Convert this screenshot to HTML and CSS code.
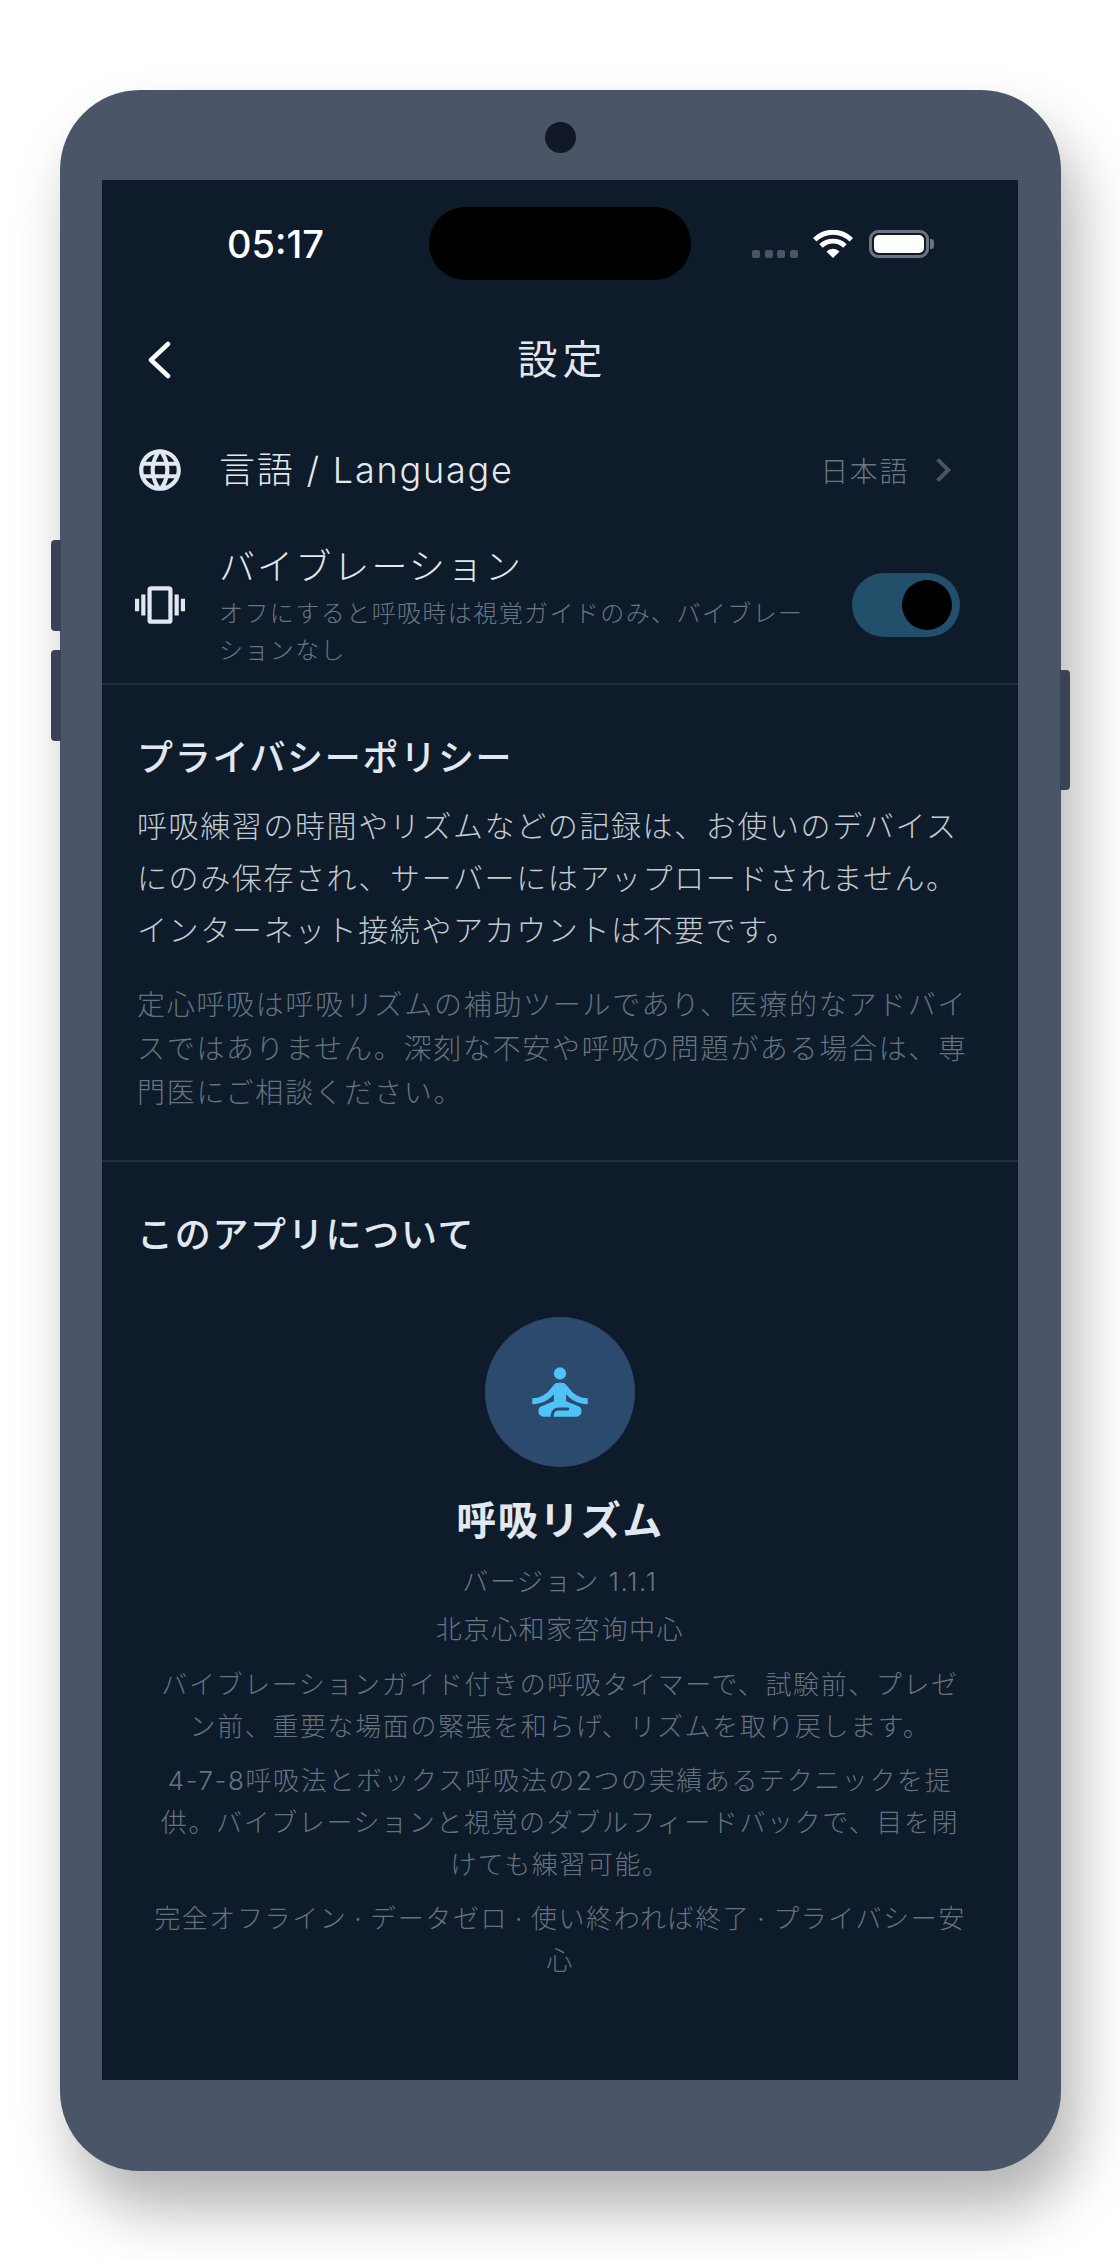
FILE: index.html
```html
<!DOCTYPE html>
<html lang="ja">
<head>
    <meta charset="UTF-8">
    <title>設定</title>
    <link rel="stylesheet" href="styles.css">
</head>
<body>
    <div class="phone">
        <span class="side-btn btn-a"></span>
        <span class="side-btn btn-b"></span>
        <span class="side-btn btn-c"></span>
        <div class="bezel-top"><span class="camera"></span></div>
        <div class="screen">
            <div class="status">
                <span class="time">05:17</span>
                <span class="island"></span>
                <div class="status-icons">
                    <span class="dots"><i></i><i></i><i></i><i></i></span>
                    <svg class="wifi" viewBox="0 0 40 28"><path d="M20 28 13.500 21.500a9.200 9.200 0 0 1 13 0Z M9.800 17.800 6.300 14.300a19.400 19.400 0 0 1 27.400 0l-3.500 3.500a14.400 14.400 0 0 0-20.400 0Z M3.500 11.500 0 8a28.300 28.300 0 0 1 40 0l-3.500 3.500a23.300 23.300 0 0 0-33 0Z" fill="#fff"/></svg>
                    <span class="battery"><span class="battery-fill"></span></span>
                    <span class="battery-cap"></span>
                </div>
            </div>
            <div class="nav">
                <svg class="back" viewBox="0 0 24 38"><path d="M21 3 4 19l17 16" fill="none" stroke="#fff" stroke-width="4.500" stroke-linecap="round" stroke-linejoin="round"/></svg>
                <h1>設定</h1>
            </div>
            <div class="row lang-row">
                <svg class="row-icon" viewBox="0 0 24 24" fill="#e2e8f0"><path d="M11.990 2C6.470 2 2 6.480 2 12s4.470 10 9.990 10C17.520 22 22 17.520 22 12S17.520 2 11.990 2zm6.930 6h-2.950c-.320-1.250-.780-2.450-1.380-3.560 1.840.630 3.370 1.910 4.330 3.560zM12 4.040c.830 1.200 1.480 2.530 1.910 3.960h-3.820c.430-1.430 1.080-2.760 1.910-3.960zM4.260 14C4.100 13.360 4 12.690 4 12s.100-1.360.260-2h3.380c-.080.660-.140 1.320-.140 2 0 .680.060 1.340.140 2H4.260zm.820 2h2.950c.320 1.250.780 2.450 1.380 3.560-1.840-.630-3.370-1.900-4.330-3.560zm2.950-8H5.080c.960-1.660 2.490-2.930 4.330-3.560C8.810 5.550 8.350 6.750 8.030 8zM12 19.960c-.830-1.200-1.480-2.530-1.910-3.960h3.820c-.430 1.430-1.080 2.760-1.910 3.960zM14.340 14H9.660c-.090-.660-.160-1.320-.160-2 0-.680.070-1.350.160-2h4.680c.090.650.160 1.320.160 2 0 .680-.070 1.340-.160 2zm.250 5.560c.600-1.110 1.060-2.310 1.380-3.560h2.950c-.960 1.650-2.490 2.930-4.330 3.560zM16.360 14c.080-.660.140-1.320.140-2 0-.680-.060-1.340-.140-2h3.380c.160.640.260 1.310.260 2s-.100 1.360-.260 2h-3.380z"/></svg>
                <span class="row-title">言語 / Language</span>
                <span class="row-value">日本語</span>
                <svg class="chev" viewBox="0 0 24 24" fill="#4b5563"><path d="M10 6 8.590 7.410 13.170 12l-4.580 4.590L10 18l6-6z"/></svg>
            </div>
            <div class="row vib-row">
                <svg class="row-icon" viewBox="0 0 24 24" fill="#e2e8f0"><path d="M0 15h2V9H0v6zm3 2h2V7H3v10zm19-8v6h2V9h-2zm-3 8h2V7h-2v10zM16.500 3h-9C6.670 3 6 3.670 6 4.500v15c0 .830.670 1.500 1.500 1.500h9c.830 0 1.500-.670 1.500-1.500v-15c0-.830-.670-1.500-1.500-1.500zM16 19H8V5h8v14z"/></svg>
                <div class="vib-text">
                    <div class="row-title">バイブレーション</div>
                    <div class="row-sub">オフにすると呼吸時は視覚ガイドのみ、バイブレーションなし</div>
                </div>
                <span class="toggle"><span class="knob"></span></span>
            </div>
            <div class="section privacy">
                <h2>プライバシーポリシー</h2>
                <p class="body-text">呼吸練習の時間やリズムなどの記録は、お使いのデバイスにのみ保存され、サーバーにはアップロードされません。インターネット接続やアカウントは不要です。</p>
                <p class="note">定心呼吸は呼吸リズムの補助ツールであり、医療的なアドバイスではありません。深刻な不安や呼吸の問題がある場合は、専門医にご相談ください。</p>
            </div>
            <div class="section about">
                <h2>このアプリについて</h2>
                <div class="about-box">
                    <div class="logo">
                        <svg viewBox="0 0 24 24" fill="#4fc3f7"><circle cx="12" cy="6" r="2"/><path d="M21 16v-2c-2.240 0-4.160-.96-5.600-2.680l-1.340-1.600A1.980 1.980 0 0 0 12.530 9h-1.050c-.59 0-1.150.26-1.530.72l-1.340 1.600C7.160 13.040 5.240 14 3 14v2c2.770 0 5.190-1.170 7-3.250V15l-3.880 1.550c-.67.27-1.120.93-1.120 1.660C5 19.200 5.800 20 6.790 20H9v-.500a2.500 2.500 0 0 1 2.500-2.500h3c.280 0 .5.220.5.500s-.22.500-.5.500h-3c-.830 0-1.500.670-1.500 1.500v.500h7.210c.990 0 1.790-.8 1.790-1.790 0-.730-.45-1.390-1.120-1.660L14 15v-2.250c1.810 2.080 4.230 3.250 7 3.250z"/></svg>
                    </div>
                    <div class="app-name">呼吸リズム</div>
                    <div class="meta">バージョン 1.1.1</div>
                    <div class="meta company">北京心和家咨询中心</div>
                    <p class="desc first">バイブレーションガイド付きの呼吸タイマーで、試験前、プレゼン前、重要な場面の緊張を和らげ、リズムを取り戻します。</p>
                    <p class="desc">4-7-8呼吸法とボックス呼吸法の2つの実績あるテクニックを提供。バイブレーションと視覚のダブルフィードバックで、目を閉けても練習可能。</p>
                    <p class="desc">完全オフライン · データゼロ · 使い終われば終了 · プライバシー安心</p>
                </div>
            </div>
        </div>
    </div>
</body>
</html>
```

FILE: styles.css
```css
* {
    box-sizing: border-box;
}
body {
    margin: 0;
    background: #fff;
    font-family: Inter, "Noto Sans CJK JP", sans-serif;
    width: 1120px;
    height: 2260px;
    overflow: hidden;
}
h1, h2, p {
    margin: 0;
    font-weight: normal;
}
.phone {
    position: relative;
    width: 1001px;
    height: 2081px;
    margin: 90px 0 0 60px;
    background: #4a5568;
    border-radius: 80px;
    padding: 0 43px 0 42px;
    box-shadow: 15px 38px 60px rgba(0, 0, 0, 0.3);
}
.side-btn {
    position: absolute;
    width: 10px;
    background: #3a4256;
    border-radius: 4px 0 0 4px;
}
.btn-a {
    left: -9px;
    top: 450px;
    height: 91px;
}
.btn-b {
    left: -9px;
    top: 560px;
    height: 91px;
}
.btn-c {
    right: -9px;
    top: 580px;
    height: 120px;
    border-radius: 0 4px 4px 0;
}
.bezel-top {
    height: 90px;
    padding-top: 32px;
    display: flex;
    justify-content: center;
}
.camera {
    width: 31px;
    height: 31px;
    border-radius: 50%;
    background: #111827;
}
.screen {
    height: 1900px;
    background: #0d1b2a;
    color: #e2e8f0;
}
.status {
    position: relative;
    height: 148px;
    padding: 42px 0 0 125px;
}
.time {
    font-size: 38px;
    font-weight: 500;
    color: #fff;
    line-height: 44px;
}
.island {
    position: absolute;
    left: 327px;
    top: 27px;
    width: 262px;
    height: 73px;
    border-radius: 37px;
    background: #000;
}
.status-icons {
    position: absolute;
    left: 650px;
    top: 50px;
    display: flex;
    align-items: flex-end;
    height: 28px;
}
.dots {
    display: flex;
    gap: 4.500px;
}
.dots i {
    width: 8px;
    height: 8px;
    border-radius: 2px;
    background: #4b5563;
}
.wifi {
    width: 40px;
    height: 28px;
    margin-left: 15.500px;
}
.battery {
    width: 60px;
    height: 28px;
    margin-left: 16px;
    border: 3px solid #6b7280;
    border-radius: 9px;
    padding: 2px;
    display: flex;
}
.battery-fill {
    flex: 1;
    background: #fff;
    border-radius: 5px;
}
.battery-cap {
    width: 4px;
    height: 10px;
    margin: 0 0 9px 1px;
    background: #6b7280;
    border-radius: 0 3px 3px 0;
}
.nav {
    position: relative;
    height: 64px;
    display: flex;
    align-items: center;
    justify-content: center;
}
.nav h1 {
    margin-left: 5px;
    font-size: 40px;
    font-weight: 400;
    letter-spacing: 5px;
    line-height: 64px;
}
.back {
    position: absolute;
    left: 45px;
    top: 13px;
    width: 24px;
    height: 38px;
}
.row {
    display: flex;
    align-items: center;
    padding-left: 33px;
}
.row-icon {
    width: 50px;
    height: 50px;
    margin-right: 34px;
    flex: none;
}
.row-title {
    font-size: 36px;
    font-weight: 300;
    letter-spacing: 2.100px;
    line-height: 44px;
}
.lang-row {
    height: 84px;
    margin-top: 36px;
}
.lang-row .row-title {
    letter-spacing: 1.800px;
}
.row-value {
    margin-left: auto;
    font-size: 28px;
    letter-spacing: 1.600px;
    color: #6b7680;
    font-weight: 300;
}
.chev {
    width: 48px;
    height: 48px;
    margin: 0 51px 0 10px;
}
.vib-row {
    margin-top: 15px;
    height: 158px;
    padding-right: 58px;
    border-bottom: 2px solid #1f2d3d;
}
.vib-text {
    width: 590px;
    padding-top: 3px;
}
.row-sub {
    margin-top: 6px;
    font-size: 24px;
    letter-spacing: 1.400px;
    line-height: 37px;
    font-weight: 300;
    color: #6a7682;
}
.toggle {
    margin-left: auto;
    width: 108px;
    height: 64px;
    border-radius: 32px;
    background: #22506b;
    display: flex;
    align-items: center;
    justify-content: flex-end;
    padding-right: 8px;
}
.knob {
    width: 50px;
    height: 50px;
    border-radius: 50%;
    background: #000;
}
.section {
    padding: 51px 35px 0;
}
.section h2 {
    font-size: 36px;
    font-weight: 500;
    letter-spacing: 1.700px;
    line-height: 44px;
}
.privacy {
    height: 477px;
    padding-right: 48px;
    border-bottom: 2px solid #1f2d3d;
}
.body-text {
    margin-top: 20px;
    font-size: 30px;
    font-weight: 300;
    line-height: 52px;
    letter-spacing: 1.600px;
    color: #c4cad0;
}
.note {
    margin-top: 27px;
    font-size: 28px;
    font-weight: 300;
    line-height: 44px;
    letter-spacing: 1.700px;
    color: #66737f;
}
.about-box {
    display: flex;
    flex-direction: column;
    align-items: center;
    text-align: center;
    margin: 0 13px;
    padding-top: 60px;
}
.logo {
    width: 150px;
    height: 150px;
    border-radius: 50%;
    background: #2c4a6e;
    display: flex;
    align-items: center;
    justify-content: center;
}
.logo svg {
    width: 74px;
    height: 74px;
}
.app-name {
    margin-top: 26px;
    font-size: 40px;
    font-weight: 700;
    letter-spacing: 1.500px;
    line-height: 56px;
}
.meta {
    margin-top: 15px;
    font-size: 26px;
    font-weight: 300;
    letter-spacing: 1.600px;
    color: #6a7682;
    line-height: 36px;
}
.company {
    margin-top: 12px;
}
.desc {
    margin-top: 12px;
    font-size: 26px;
    font-weight: 300;
    letter-spacing: 1.600px;
    word-spacing: -2px;
    line-height: 42px;
    color: #66737f;
}
.first {
    margin-top: 16px;
}
```
